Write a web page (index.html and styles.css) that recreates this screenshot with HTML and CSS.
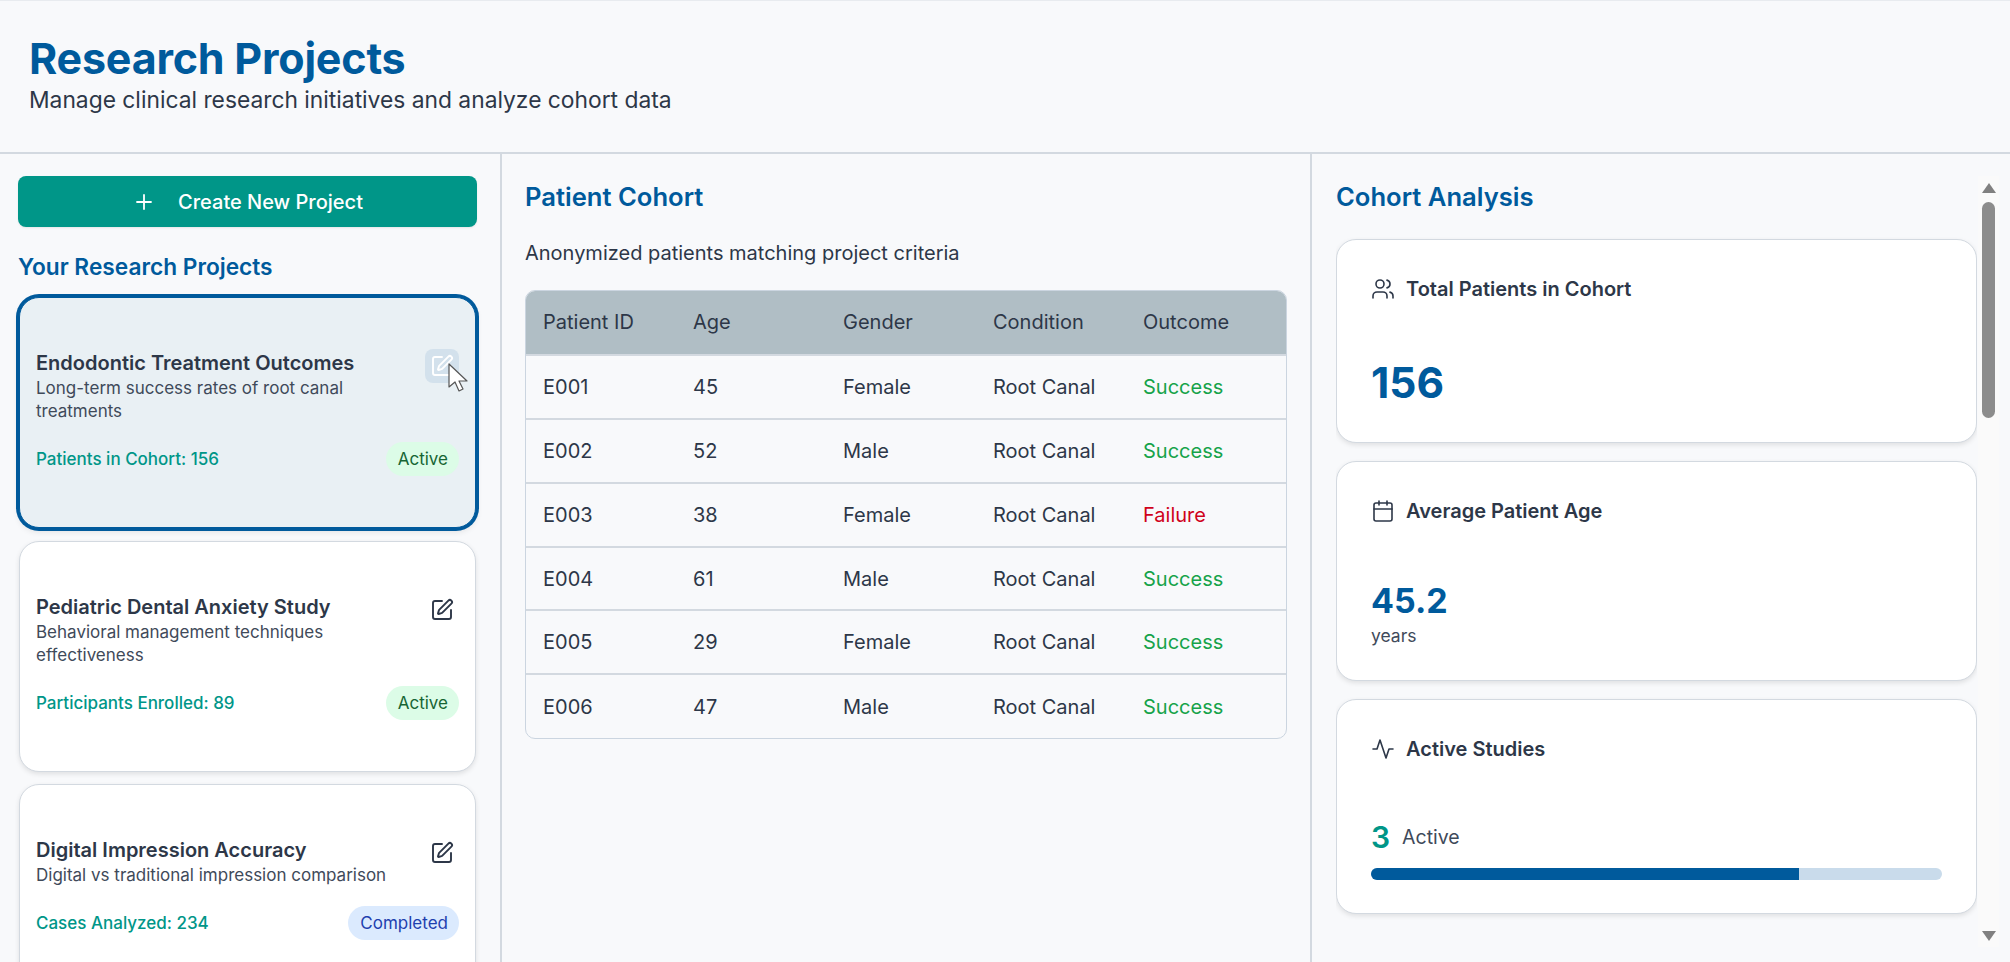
FILE: index.html
```html
<!DOCTYPE html>
<html lang="en">
<head>
<meta charset="utf-8">
<title>Research Projects</title>
<link rel="stylesheet" href="styles.css">
</head>
<body>
<div class="app">
  <header class="page-header">
    <h1>Research Projects</h1>
    <p>Manage clinical research initiatives and analyze cohort data</p>
  </header>
  <main class="columns">
    <aside class="projects">
      <button class="create-btn"><svg class="plus" viewBox="0 0 24 24"><path d="M5 12h14M12 5v14"/></svg><span>Create New Project</span></button>
      <h2 class="projects-title">Your Research Projects</h2>
      <div class="project-list">
        <article class="project selected">
          <div class="project-head">
            <div class="project-text">
              <h3>Endodontic Treatment Outcomes</h3>
              <p>Long-term success rates of root canal treatments</p>
            </div>
            <button class="edit hover"><svg viewBox="0 0 24 24"><path d="M12 3H5a2 2 0 0 0-2 2v14a2 2 0 0 0 2 2h14a2 2 0 0 0 2-2v-7"/><path d="M18.375 2.625a1 1 0 0 1 3 3l-9.013 9.014a2 2 0 0 1-.853.505l-2.873.84a.5.5 0 0 1-.62-.62l.84-2.873a2 2 0 0 1 .506-.852z"/></svg></button>
          </div>
          <div class="project-meta"><span class="count">Patients in Cohort: 156</span><span class="badge active">Active</span></div>
          <svg class="cursor" viewBox="0 0 20 30"><path d="M1 1v23l6-5 4 9 4-2-4-8h8z"/></svg>
        </article>
        <article class="project">
          <div class="project-head">
            <div class="project-text">
              <h3>Pediatric Dental Anxiety Study</h3>
              <p>Behavioral management techniques effectiveness</p>
            </div>
            <button class="edit"><svg viewBox="0 0 24 24"><path d="M12 3H5a2 2 0 0 0-2 2v14a2 2 0 0 0 2 2h14a2 2 0 0 0 2-2v-7"/><path d="M18.375 2.625a1 1 0 0 1 3 3l-9.013 9.014a2 2 0 0 1-.853.505l-2.873.84a.5.5 0 0 1-.62-.62l.84-2.873a2 2 0 0 1 .506-.852z"/></svg></button>
          </div>
          <div class="project-meta"><span class="count">Participants Enrolled: 89</span><span class="badge active">Active</span></div>
        </article>
        <article class="project">
          <div class="project-head">
            <div class="project-text">
              <h3>Digital Impression Accuracy</h3>
              <p>Digital vs traditional impression comparison</p>
            </div>
            <button class="edit"><svg viewBox="0 0 24 24"><path d="M12 3H5a2 2 0 0 0-2 2v14a2 2 0 0 0 2 2h14a2 2 0 0 0 2-2v-7"/><path d="M18.375 2.625a1 1 0 0 1 3 3l-9.013 9.014a2 2 0 0 1-.853.505l-2.873.84a.5.5 0 0 1-.62-.62l.84-2.873a2 2 0 0 1 .506-.852z"/></svg></button>
          </div>
          <div class="project-meta"><span class="count">Cases Analyzed: 234</span><span class="badge completed">Completed</span></div>
        </article>
      </div>
    </aside>
    <section class="cohort">
      <h2 class="section-title">Patient Cohort</h2>
      <p class="cohort-sub">Anonymized patients matching project criteria</p>
      <div class="table-wrap">
        <table>
          <thead><tr><th>Patient ID</th><th>Age</th><th>Gender</th><th>Condition</th><th>Outcome</th></tr></thead>
          <tbody>
            <tr><td>E001</td><td>45</td><td>Female</td><td>Root Canal</td><td class="success">Success</td></tr>
            <tr><td>E002</td><td>52</td><td>Male</td><td>Root Canal</td><td class="success">Success</td></tr>
            <tr><td>E003</td><td>38</td><td>Female</td><td>Root Canal</td><td class="failure">Failure</td></tr>
            <tr><td>E004</td><td>61</td><td>Male</td><td>Root Canal</td><td class="success">Success</td></tr>
            <tr><td>E005</td><td>29</td><td>Female</td><td>Root Canal</td><td class="success">Success</td></tr>
            <tr><td>E006</td><td>47</td><td>Male</td><td>Root Canal</td><td class="success">Success</td></tr>
          </tbody>
        </table>
      </div>
    </section>
    <section class="analysis">
      <div class="analysis-scroll">
        <h2 class="section-title">Cohort Analysis</h2>
        <div class="stat stat-total">
          <div class="stat-head"><svg viewBox="0 0 24 24"><path d="M16 21v-2a4 4 0 0 0-4-4H6a4 4 0 0 0-4 4v2"/><circle cx="9" cy="7" r="4"/><path d="M22 21v-2a4 4 0 0 0-3-3.87"/><path d="M16 3.13a4 4 0 0 1 0 7.75"/></svg><span>Total Patients in Cohort</span></div>
          <div class="big-value">156</div>
        </div>
        <div class="stat stat-age">
          <div class="stat-head"><svg viewBox="0 0 24 24"><path d="M8 2v4M16 2v4"/><rect x="3" y="4" width="18" height="18" rx="2"/><path d="M3 10h18"/></svg><span>Average Patient Age</span></div>
          <div class="mid-value">45.2</div>
          <div class="unit">years</div>
        </div>
        <div class="stat stat-active">
          <div class="stat-head"><svg viewBox="0 0 24 24"><path d="M22 12h-4l-3 9L9 3l-3 9H2"/></svg><span>Active Studies</span></div>
          <div class="active-line"><span class="active-num">3</span><span class="active-label">Active</span></div>
          <div class="progress"><div class="progress-fill"></div></div>
        </div>
        <h2 class="section-title next-title">Clinical Insights</h2>
      </div>
      <div class="scrollbar" aria-hidden="true">
        <span class="arrow up"></span>
        <span class="thumb"></span>
        <span class="arrow down"></span>
      </div>
    </section>
  </main>
</div>
</body>
</html>
```

FILE: styles.css
```css
* { box-sizing: border-box; }
html, body { margin: 0; height: 100%; overflow: hidden; }
body { background: #f8f9fb; color: #2d3748; font-family: Inter, "Liberation Sans", sans-serif; }
h1, h2, h3, p { margin: 0; }
button { font-family: inherit; border: 0; cursor: pointer; }

.app { height: 962px; display: flex; flex-direction: column; border-top: 1px solid #e8ebef; }
.page-header { height: 153px; padding: 31px 29px 0; border-bottom: 2px solid #d3d9e0; }
.page-header h1 { font-size: 43px; line-height: 52px; font-weight: 700; color: #005a9c; letter-spacing: -0.2px; }
.page-header p { margin-top: 1px; font-size: 22.8px; line-height: 30px; color: #2d3748; }

.columns { flex: 1; min-height: 0; display: grid; grid-template-columns: 502px 810px 1fr; }

.projects { padding: 22px 23px 0 18px; border-right: 2px solid #d3d9e0; overflow: hidden; }
.create-btn { width: 459px; height: 51px; display: flex; align-items: center; justify-content: center; gap: 22px; background: #009688; color: #fff; font-size: 20px; font-weight: 500; border-radius: 8px; box-shadow: 0 1px 2px rgba(0,0,0,.08); }
.plus { width: 24px; height: 24px; fill: none; stroke: #fff; stroke-width: 1.8; stroke-linecap: round; }
.projects-title { margin-top: 26px; font-size: 22.7px; line-height: 28px; font-weight: 600; color: #005a9c; }
.project-list { margin-top: 16px; margin-left: 1px; width: 457px; display: flex; flex-direction: column; gap: 12.5px; }
.project { position: relative; background: #fff; border: 1px solid #d3d9e0; border-radius: 20px; padding: 51px 16px; box-shadow: 0 2px 5px rgba(0,0,0,.1); }
.project.selected { background: #e9f0f4; border-color: #005a9c; box-shadow: 0 0 0 3px #005a9c, 0 3px 7px rgba(0,0,0,.12); }
.project-head { display: flex; justify-content: space-between; align-items: flex-start; gap: 12px; }
.project-text { flex: 1; min-width: 0; }
.project h3 { font-size: 20px; line-height: 28px; font-weight: 600; color: #2d3748; }
.project p { font-size: 17px; line-height: 23px; color: #3f4a5a; }
.edit { flex: none; width: 34px; height: 34px; padding: 5px; background: transparent; border-radius: 8px; }
.edit svg { display: block; width: 24px; height: 24px; fill: none; stroke: #2d3748; stroke-width: 1.9; stroke-linecap: round; stroke-linejoin: round; }
.edit.hover { background: #d3e1ec; }
.edit.hover svg { stroke: #fff; }
.project-meta { margin-top: 19px; display: flex; align-items: center; justify-content: space-between; }
.count { font-size: 17px; font-weight: 500; color: #009688; }
.badge { height: 34px; padding: 0 11px 0 12px; display: inline-flex; align-items: center; border-radius: 17px; font-size: 17px; font-weight: 400; }
.badge.active { background: #dcfce7; color: #166534; }
.badge.completed { background: #dbeafe; color: #1e40af; }
.cursor { position: absolute; left: 428px; top: 65px; width: 20px; height: 30px; fill: #fff; stroke: #555; stroke-width: 1.2; stroke-linejoin: round; }

.section-title { font-size: 25.6px; line-height: 30px; font-weight: 600; color: #005a9c; }
.cohort { padding: 28px 23px 0; border-right: 2px solid #d3d9e0; }
.cohort-sub { margin-top: 27px; font-size: 20px; line-height: 28px; color: #2d3748; }
.table-wrap { margin-top: 23px; width: 762px; border: 1px solid #cbd5e0; border-radius: 10px; overflow: hidden; }
table { width: 100%; border-collapse: collapse; table-layout: fixed; }
th, td { padding: 0 17px; height: 63.9px; text-align: left; font-size: 20px; font-weight: 400; color: #2d3748; }
th { background: #b0bec5; }
th:nth-child(-n+4), td:nth-child(-n+4) { width: 150px; }
tbody tr + tr td, tbody tr:first-child td { border-top: 2px solid #d3d9e0; }
td.success { color: #16a34a; }
td.failure { color: #d0021b; }

.analysis { position: relative; padding: 28px 0 0 24px; overflow: hidden; }
.analysis-scroll { width: 641px; height: 765px; overflow: hidden; }
.stat { background: #fff; border: 1px solid #d3d9e0; border-radius: 20px; padding: 35px 34px 0; box-shadow: 0 2px 5px rgba(0,0,0,.1); margin-top: 18px; }
.analysis-scroll .section-title + .stat { margin-top: 27px; }
.stat-total { height: 204px; }
.stat-age { height: 220px; }
.stat-active { height: 215px; }
.stat-head { display: flex; align-items: center; gap: 11.5px; font-size: 20px; line-height: 28px; font-weight: 600; color: #2d3748; }
.stat-head svg { flex: none; margin-left: -0.5px; width: 24px; height: 24px; fill: none; stroke: #2d3748; stroke-width: 1.6; stroke-linecap: round; stroke-linejoin: round; }
.big-value { margin-top: 54px; font-size: 42.5px; line-height: 52px; font-weight: 700; color: #005a9c; }
.mid-value { margin-top: 54px; font-size: 34px; line-height: 44px; font-weight: 700; color: #005a9c; }
.unit { margin-top: 1px; font-size: 17.5px; line-height: 24px; color: #3f4a5a; }
.active-line { margin-top: 52px; display: flex; align-items: center; gap: 12px; height: 44px; }
.active-num { font-size: 30px; font-weight: 600; color: #009688; }
.active-label { font-size: 19.5px; color: #3f4a5a; }
.progress { margin-top: 9px; height: 12px; border-radius: 6px; background: #c9dbeb; overflow: hidden; }
.progress-fill { width: 75%; height: 100%; background: #005a9c; }
.next-title { margin-top: 30px; }

.scrollbar { position: absolute; right: 11px; top: 22px; bottom: 15px; width: 21px; background: #fafafa; display: flex; flex-direction: column; align-items: center; }
.arrow { width: 0; height: 0; border-left: 7px solid transparent; border-right: 7px solid transparent; }
.arrow.up { margin-top: 7px; border-bottom: 10px solid #808080; }
.arrow.down { position: absolute; bottom: 6px; border-top: 10px solid #808080; }
.thumb { margin-top: 9px; width: 13px; height: 216px; border-radius: 7px; background: #8c8c8c; }
```
